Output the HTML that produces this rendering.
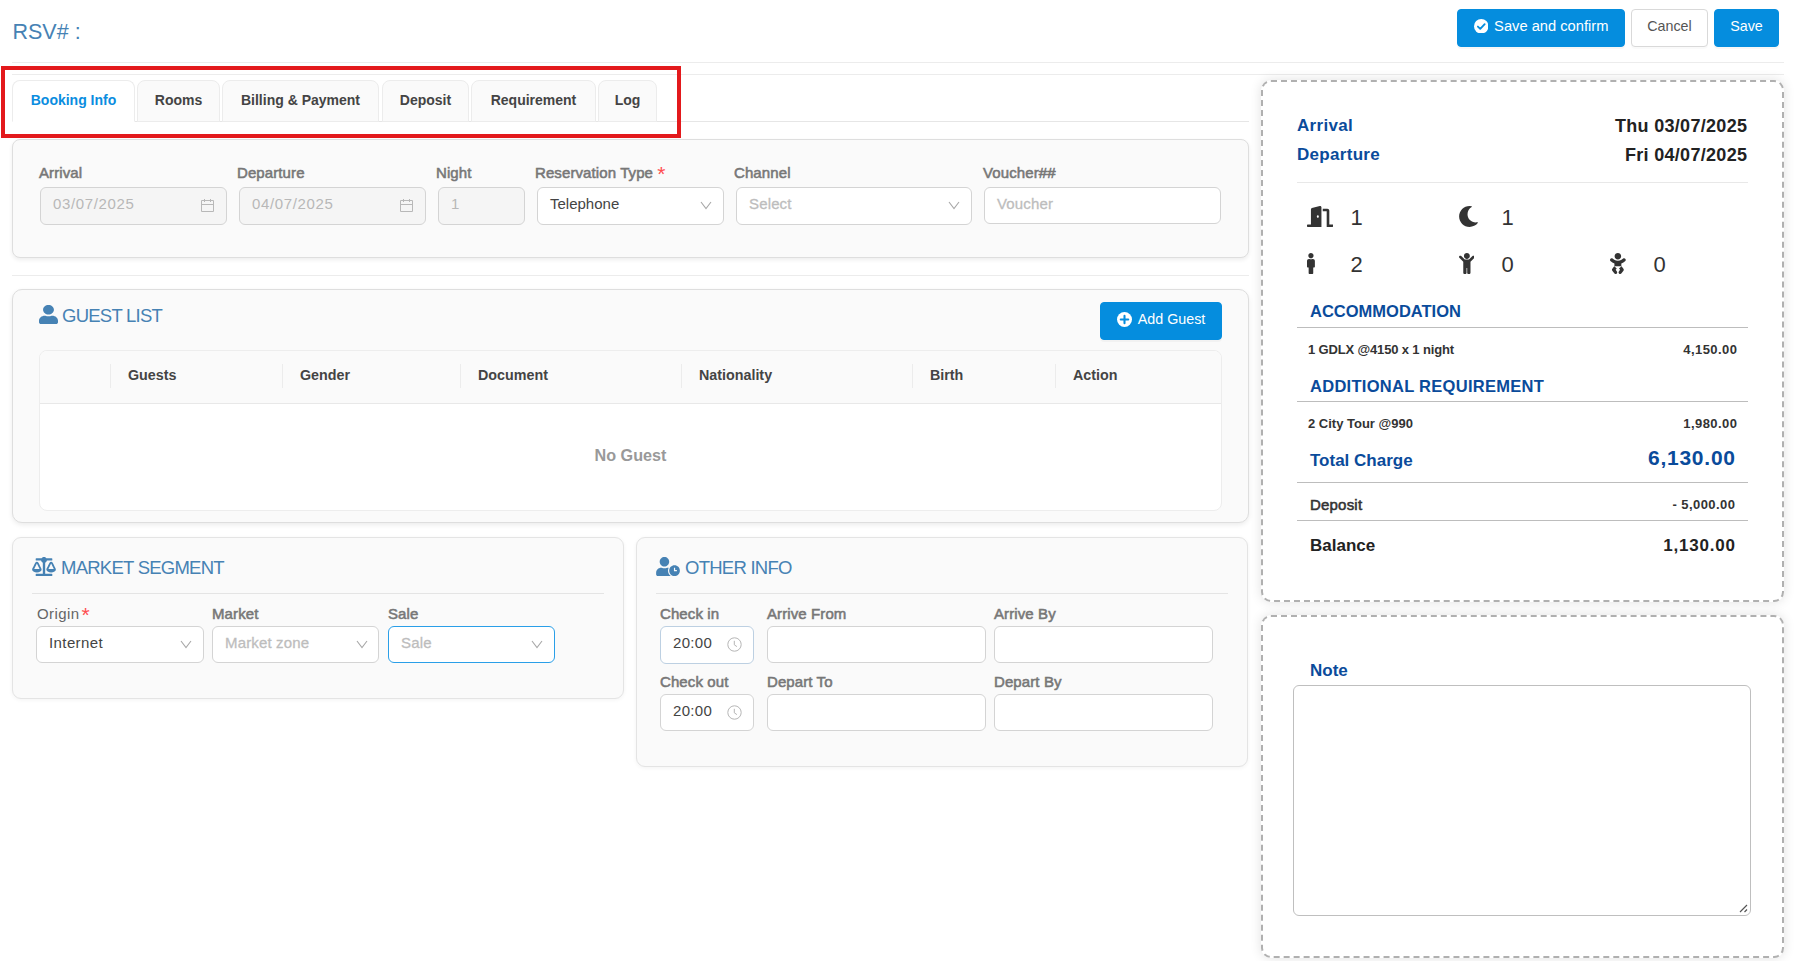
<!DOCTYPE html>
<html lang="en">
<head>
<meta charset="utf-8">
<title>Reservation</title>
<style>
*{box-sizing:border-box;margin:0;padding:0}
html,body{width:1794px;height:961px;overflow:hidden;background:#fff}
body{position:relative;font-family:"Liberation Sans",sans-serif;font-size:15px;color:#333}
.abs{position:absolute}
.title{left:12.5px;top:18px;font-size:21.5px;line-height:28px;color:#4682b4;white-space:nowrap}
.hr{position:absolute;height:1px;background:#ececec}
.btn{position:absolute;height:38px;border-radius:4px;font-size:14.3px;line-height:32px;text-align:center;white-space:nowrap;border:1px solid #058dde}
.btn.primary{background:#058dde;color:#fff;box-shadow:0 2px 0 rgba(0,0,0,.03)}
.btn.default{background:#fff;color:#555;border-color:#d9d9d9;box-shadow:0 2px 0 rgba(0,0,0,.02)}
.btn svg{vertical-align:-2.5px;margin-right:6px}
.redbox{left:1px;top:66px;width:680px;height:72px;border:4px solid #e3191c}
.tab{position:absolute;top:80px;height:42px;border:1px solid #ececec;border-radius:8px 8px 0 0;background:#fafafa;font-weight:bold;font-size:14px;line-height:39px;text-align:center;color:#444;white-space:nowrap}
.tab.active{background:#fff;color:#0a8de0;border-bottom-color:#fff}
.panel{position:absolute;background:#fafafa;border:1px solid #dedede;border-radius:10px;box-shadow:0 2px 5px rgba(0,0,0,.08)}
.panel.p2{border-radius:9px;border-color:#e4e4e4;box-shadow:0 1px 4px rgba(0,0,0,.05)}
.lbl{position:absolute;font-size:15px;letter-spacing:.1px;line-height:20px;font-weight:normal;-webkit-text-stroke:.55px #777;color:#777;white-space:nowrap}
.lbl i{font-style:normal;color:#ff4d4f;font-weight:normal;font-size:21px;line-height:0;position:relative;top:3px;left:0px;letter-spacing:0;-webkit-text-stroke:0 transparent}
.inp{position:absolute;height:38px;border:1px solid #d4d4d4;border-radius:6px;background:#fff;font-size:15px;line-height:32px;padding-left:12px;color:#444;white-space:nowrap}
.inp.dis{background:#f5f5f5;color:#b8b8b8;letter-spacing:.65px}
.inp.ph{color:#bdbdbd;-webkit-text-stroke:.3px #bdbdbd;letter-spacing:.15px}
.inp.focus{border:1.5px solid #2a9fe8}
.inp svg{position:absolute}
.sect{position:absolute;font-size:18.5px;letter-spacing:-.75px;line-height:24px;margin-top:1px;color:#4682b4;white-space:nowrap}

.tbl{border:1px solid #ededed;border-radius:8px;background:#fff;overflow:hidden}
.thead{height:53px;background:#fafafa;border-bottom:1px solid #e8e8e8;display:flex;align-items:center;font-weight:bold;font-size:14.3px;color:#444}
.thead span{display:block;height:24px;line-height:22px;padding-left:17px;border-right:1px solid #ececec;margin-top:-3px;flex:none}
.thead span.last{border-right:0}
.empty{text-align:center;font-weight:bold;font-size:16.2px;color:#999;line-height:20px;padding-top:40.5px}

.card{position:absolute;background:#fff;border:2px dashed #b0b0b0;border-radius:10px;box-shadow:0 0 12px rgba(0,0,0,.12)}
.sl,.sr,.num,.sh,.it,.tot,.dep,.bal{position:absolute;white-space:nowrap}
.sl{font-size:17px;line-height:22px;font-weight:bold;color:#0a4b9b;letter-spacing:.3px;margin-top:1px}
.sr{font-size:18px;line-height:22px;font-weight:bold;color:#222;letter-spacing:.3px;margin-top:.5px;margin-right:-.3px}
.num{font-size:22px;line-height:28px;color:#333;margin-left:.5px}
.sh{font-size:16.5px;line-height:22px;font-weight:bold;color:#0a4b9b;margin-top:1px}
.it{font-size:13px;line-height:18px;font-weight:bold;color:#333;margin-top:1px}
.it.n{letter-spacing:.45px;margin-right:-.45px}
.tot{font-size:21px;line-height:28px;font-weight:bold;color:#0a4b9b;letter-spacing:.75px;margin-right:-.75px}
.dep{font-size:15px;line-height:20px;font-weight:normal;-webkit-text-stroke:.55px #333;letter-spacing:.2px;color:#333;margin-top:.8px}
.bal{font-size:17px;line-height:22px;font-weight:bold;color:#222;margin-top:2px}
.bal.n{letter-spacing:.8px;margin-right:-.8px}
.ta{border:1px solid #bfbfbf;border-radius:6px;background:#fff}
</style>
</head>
<body>
<div class="abs title">RSV# :</div>
<div class="btn primary" style="left:1457px;top:9px;width:168px;font-size:14.7px"><svg width="14.5" height="14.5" style="vertical-align:-2px" viewBox="0 0 16 16"><circle cx="8" cy="8" r="8" fill="#fff"/><path d="M4.3 8.3l2.6 2.6 4.9-5.2" fill="none" stroke="#058dde" stroke-width="2" stroke-linecap="round" stroke-linejoin="round"/></svg>Save and confirm</div>
<div class="btn default" style="left:1631px;top:9px;width:77px">Cancel</div>
<div class="btn primary" style="left:1714px;top:9px;width:65px">Save</div>
<div class="hr" style="left:12px;top:62px;width:1772px"></div>
<div class="hr" style="left:12px;top:74px;width:1772px"></div>
<div class="hr" style="left:12px;top:121px;width:1237px;background:#e6e6e6"></div>
<div class="tab active" style="left:12px;width:123px">Booking Info</div>
<div class="tab" style="left:137px;width:83px">Rooms</div>
<div class="tab" style="left:222px;width:157px">Billing &amp; Payment</div>
<div class="tab" style="left:382px;width:87px">Deposit</div>
<div class="tab" style="left:471px;width:125px">Requirement</div>
<div class="tab" style="left:598px;width:59px">Log</div>
<div class="abs redbox"></div>

<!-- booking info panel -->
<div class="panel" style="left:12px;top:139px;width:1237px;height:119px;border-radius:8px;box-shadow:0 2px 4px rgba(0,0,0,.07)"></div>
<div class="lbl" style="left:39px;top:163px">Arrival</div>
<div class="lbl" style="left:237px;top:163px">Departure</div>
<div class="lbl" style="left:436px;top:163px">Night</div>
<div class="lbl" style="left:535px;top:163px">Reservation Type <i>*</i></div>
<div class="lbl" style="left:734px;top:163px">Channel</div>
<div class="lbl" style="left:983px;top:163px">Voucher##</div>
<div class="inp dis" style="left:40px;top:187px;width:187px">03/07/2025<svg class="cal" style="left:160px;top:10px" width="14" height="14" viewBox="0 0 14 14"><path d="M.5 2.5h12v11h-12zM.5 6.500h12M3.500 1v3M9.500 1v3" fill="none" stroke="#b8b8b8" stroke-width="1"/></svg></div>
<div class="inp dis" style="left:239px;top:187px;width:187px">04/07/2025<svg class="cal" style="left:160px;top:10px" width="14" height="14" viewBox="0 0 14 14"><path d="M.5 2.5h12v11h-12zM.5 6.500h12M3.500 1v3M9.500 1v3" fill="none" stroke="#b8b8b8" stroke-width="1"/></svg></div>
<div class="inp dis" style="left:438px;top:187px;width:87px">1</div>
<div class="inp" style="left:537px;top:187px;width:187px">Telephone<svg style="left:162px;top:13px" width="12" height="9" viewBox="0 0 12 9"><path d="M1 1l5 6.5 5-6.5" fill="none" stroke="#a8a8a8" stroke-width="1.1"/></svg></div>
<div class="inp ph" style="left:736px;top:187px;width:236px">Select<svg style="left:211px;top:13px" width="12" height="9" viewBox="0 0 12 9"><path d="M1 1l5 6.5 5-6.5" fill="none" stroke="#a8a8a8" stroke-width="1.1"/></svg></div>
<div class="inp ph" style="left:984px;top:187px;width:237px;height:36.5px">Voucher</div>
<div class="hr" style="left:12px;top:275px;width:1237px"></div>

<!-- guest list panel -->
<div class="panel" style="left:12px;top:289px;width:1237px;height:234px"></div>
<svg class="abs" style="left:39px;top:305px" width="19" height="19" viewBox="0 0 448 512" preserveAspectRatio="none"><path fill="#4682b4" d="M224 256c70.700 0 128-57.300 128-128S294.700 0 224 0 96 57.300 96 128s57.300 128 128 128zm89.600 32h-16.700c-22.200 10.200-46.900 16-72.900 16s-50.600-5.800-72.900-16h-16.700C60.200 288 0 348.200 0 422.400V464c0 26.500 21.500 48 48 48h352c26.500 0 48-21.500 48-48v-41.600c0-74.200-60.200-134.400-134.400-134.400z"/></svg>
<div class="sect" style="left:62px;top:303px">GUEST LIST</div>
<div class="btn primary" style="left:1100px;top:302px;width:122px"><svg width="15" height="15" viewBox="0 0 16 16"><circle cx="8" cy="8" r="8" fill="#fff"/><path d="M8 4v8M4 8h8" fill="none" stroke="#058dde" stroke-width="2.2" stroke-linecap="round"/></svg>Add Guest</div>
<div class="abs tbl" style="left:39px;top:350px;width:1183px;height:161px">
 <div class="thead">
  <span style="width:71px"></span><span style="width:172px">Guests</span><span style="width:178px">Gender</span><span style="width:221px">Document</span><span style="width:231px">Nationality</span><span style="width:143px">Birth</span><span style="width:165px" class="last">Action</span>
 </div>
 <div class="empty">No Guest</div>
</div>

<!-- market segment -->
<div class="panel p2" style="left:12px;top:537px;width:612px;height:162px"></div>
<svg class="abs" style="left:32px;top:557px" width="24" height="19" viewBox="0 0 640 512"><path fill="#4682b4" d="M256 336h-.02c0-16.180 1.340-8.730-85.050-181.510-17.650-35.290-68.190-35.360-85.870 0C-2.060 328.750.02 320.330.02 336H0c0 44.180 57.310 80 128 80s128-35.820 128-80zM128 176l72 144H56l72-144zm511.980 160c0-16.180 1.340-8.730-85.050-181.510-17.650-35.290-68.190-35.360-85.870 0-87.120 174.260-85.040 165.840-85.040 181.510H384c0 44.180 57.310 80 128 80s128-35.820 128-80h-.02zM440 320l72-144 72 144H440zm88 128H352V153.250c23.510-10.290 41.160-31.480 46.390-57.250H528c8.840 0 16-7.160 16-16V48c0-8.840-7.160-16-16-16H383.640C369.040 12.680 346.090 0 320 0s-49.040 12.680-63.640 32H112c-8.840 0-16 7.160-16 16v32c0 8.840 7.160 16 16 16h129.610c5.230 25.760 22.870 46.960 46.390 57.250V448H112c-8.840 0-16 7.160-16 16v32c0 8.840 7.160 16 16 16h416c8.840 0 16-7.160 16-16v-32c0-8.840-7.160-16-16-16z"/></svg>
<div class="sect" style="left:61px;top:555px">MARKET SEGMENT</div>
<div class="hr" style="left:32px;top:593px;width:572px;background:#e4e4e4"></div>
<div class="lbl" style="left:37px;top:604px;font-weight:normal;color:#666;letter-spacing:.4px;-webkit-text-stroke:0 transparent">Origin <i style="margin-left:-2.5px">*</i></div>
<div class="lbl" style="left:212px;top:604px">Market</div>
<div class="lbl" style="left:388px;top:604px">Sale</div>
<div class="inp" style="left:36px;top:626px;width:168px;height:37px;letter-spacing:.4px">Internet<svg style="left:143px;top:13px" width="12" height="9" viewBox="0 0 12 9"><path d="M1 1l5 6.5 5-6.5" fill="none" stroke="#a8a8a8" stroke-width="1.1"/></svg></div>
<div class="inp ph" style="left:212px;top:626px;width:167px;height:37px">Market zone<svg style="left:143px;top:13px" width="12" height="9" viewBox="0 0 12 9"><path d="M1 1l5 6.5 5-6.5" fill="none" stroke="#a8a8a8" stroke-width="1.1"/></svg></div>
<div class="inp ph focus" style="left:388px;top:626px;width:167px;height:37px">Sale<svg style="left:142px;top:13px" width="12" height="9" viewBox="0 0 12 9"><path d="M1 1l5 6.5 5-6.5" fill="none" stroke="#a8a8a8" stroke-width="1.1"/></svg></div>

<!-- other info -->
<div class="panel p2" style="left:636px;top:537px;width:612px;height:230px"></div>
<svg class="abs" style="left:656px;top:557px" width="24" height="19" viewBox="0 0 640 512"><path fill="#4682b4" d="M496 224c-79.600 0-144 64.400-144 144s64.400 144 144 144 144-64.400 144-144-64.400-144-144-144zm64 150.300c0 5.300-4.400 9.700-9.700 9.700h-60.600c-5.300 0-9.700-4.400-9.700-9.700v-76.600c0-5.300 4.400-9.700 9.700-9.700h12.600c5.300 0 9.700 4.400 9.700 9.700V352h38.300c5.300 0 9.700 4.400 9.700 9.700v12.600zM320 368c0-27.800 6.700-54.100 18.200-77.500-8-1.500-16.200-2.500-24.600-2.500h-16.700c-22.200 10.200-46.900 16-72.900 16s-50.600-5.800-72.900-16h-16.700C60.200 288 0 348.200 0 422.400V464c0 26.500 21.500 48 48 48h347.100c-45.300-31.900-75.100-84.500-75.100-144zm-96-112c70.700 0 128-57.300 128-128S294.700 0 224 0 96 57.300 96 128s57.300 128 128 128z"/></svg>
<div class="sect" style="left:685px;top:555px">OTHER INFO</div>
<div class="hr" style="left:656px;top:593px;width:572px;background:#e4e4e4"></div>
<div class="lbl" style="left:660px;top:604px">Check in</div>
<div class="lbl" style="left:767px;top:604px">Arrive From</div>
<div class="lbl" style="left:994px;top:604px">Arrive By</div>
<div class="inp" style="left:660px;top:626px;width:94px;height:38px;border-color:#bdd0e2;color:#444;letter-spacing:.3px">20:00<svg style="left:66px;top:10px" width="15" height="15" viewBox="0 0 15 15"><circle cx="7.500" cy="7.500" r="6.700" fill="none" stroke="#b5b5b5" stroke-width="1"/><path d="M7.300 3.800v4l2.600 1.800" fill="none" stroke="#b5b5b5" stroke-width="1"/></svg></div>
<div class="inp" style="left:767px;top:626px;width:219px;height:37px"></div>
<div class="inp" style="left:994px;top:626px;width:219px;height:37px"></div>
<div class="lbl" style="left:660px;top:672px">Check out</div>
<div class="lbl" style="left:767px;top:672px">Depart To</div>
<div class="lbl" style="left:994px;top:672px">Depart By</div>
<div class="inp" style="left:660px;top:693.5px;width:94px;height:37.5px;color:#444;letter-spacing:.3px">20:00<svg style="left:66px;top:10px" width="15" height="15" viewBox="0 0 15 15"><circle cx="7.500" cy="7.500" r="6.700" fill="none" stroke="#b5b5b5" stroke-width="1"/><path d="M7.300 3.800v4l2.600 1.800" fill="none" stroke="#b5b5b5" stroke-width="1"/></svg></div>
<div class="inp" style="left:767px;top:693.5px;width:219px;height:37.5px"></div>
<div class="inp" style="left:994px;top:693.5px;width:219px;height:37.5px"></div>

<!-- summary card -->
<div class="card" style="left:1261px;top:80px;width:523px;height:522px"></div>
<div class="sl" style="left:1297px;top:114px">Arrival</div>
<div class="sr" style="right:47px;top:114px">Thu 03/07/2025</div>
<div class="sl" style="left:1297px;top:143px">Departure</div>
<div class="sr" style="right:47px;top:143px">Fri 04/07/2025</div>
<div class="hr" style="left:1297px;top:182px;width:451px;background:#e8e8e8"></div>
<svg class="abs" style="left:1307px;top:206px" width="26.25" height="21" viewBox="0 0 640 512"><path fill="#333" d="M624 448h-80V113.450C544 86.190 522.470 64 496 64H384v64h96v384h144c8.840 0 16-7.160 16-16v-32c0-8.840-7.160-16-16-16zM312.240 1.010l-192 49.740C106 54.440 96 67.700 96 82.920V448H16c-8.840 0-16 7.160-16 16v32c0 8.840 7.160 16 16 16h336V33.180c0-21.580-19.560-37.410-39.760-32.170zM264 288c-13.250 0-24-14.330-24-32s10.750-32 24-32 24 14.330 24 32-10.750 32-24 32z"/></svg><div class="num" style="left:1350px;top:204px">1</div>
<svg class="abs" style="left:1458px;top:206px" width="21" height="21" viewBox="0 0 512 512"><path fill="#333" d="M283.211 512c78.962 0 151.079-35.925 198.857-94.792 7.068-8.708-.639-21.430-11.562-19.350-124.203 23.654-238.262-71.576-238.262-196.954 0-72.222 38.662-138.635 101.498-174.394 9.686-5.512 7.250-20.197-3.756-22.230A258.156 258.156 0 0 0 283.211 0c-141.309 0-256 114.511-256 256 0 141.309 114.511 256 256 256z"/></svg><div class="num" style="left:1501px;top:204px">1</div>
<svg class="abs" style="left:1307px;top:253.3px" width="7.875" height="21" viewBox="0 0 192 512"><path fill="#333" d="M96 0c35.346 0 64 28.654 64 64s-28.654 64-64 64-64-28.654-64-64S60.654 0 96 0m48 144h-11.360c-22.711 10.443-49.590 10.894-73.280 0H48c-26.510 0-48 21.490-48 48v136c0 13.255 10.745 24 24 24h16v136c0 13.255 10.745 24 24 24h64c13.255 0 24-10.745 24-24V352h16c13.255 0 24-10.745 24-24V192c0-26.510-21.490-48-48-48z"/></svg><div class="num" style="left:1350px;top:251px">2</div>
<svg class="abs" style="left:1458.5px;top:253.3px" width="15.75" height="21" viewBox="0 0 384 512"><path fill="#333" d="M120 72c0-39.765 32.235-72 72-72s72 32.235 72 72c0 39.764-32.235 72-72 72s-72-32.236-72-72zm254.627 1.373c-12.496-12.497-32.758-12.497-45.254 0L242.745 160H141.254L54.627 73.373c-12.496-12.497-32.758-12.497-45.254 0-12.497 12.497-12.497 32.758 0 45.255L104 213.254V480c0 17.673 14.327 32 32 32h16c17.673 0 32-14.327 32-32V368h16v112c0 17.673 14.327 32 32 32h16c17.673 0 32-14.327 32-32V213.254l94.627-94.627c12.497-12.497 12.497-32.757 0-45.254z"/></svg><div class="num" style="left:1501px;top:251px">0</div>
<svg class="abs" style="left:1610px;top:253.3px" width="15.75" height="21" viewBox="0 0 384 512"><path fill="#333" d="M192 160c44.200 0 80-35.800 80-80S236.200 0 192 0s-80 35.800-80 80 35.800 80 80 80zm-53.400 248.800l25.600-32-61.500-51.200L56.800 383.300c-11.400 14.200-11.700 34.400-.8 49l48 64c7.900 10.500 19.900 16 32 16 8.300 0 16.800-2.600 24-8 17.700-13.200 21.200-38.300 8-56l-29.400-39.500zm142.700-83.200l-61.500 51.200 25.600 32L216 448.300c-13.200 17.700-9.700 42.800 8 56 7.200 5.400 15.600 8 24 8 12.200 0 24.200-5.500 32-16l48-64c10.900-14.600 10.600-34.800-.8-49l-45.900-57.700zM376.700 145c-12.700-18.100-37.600-22.400-55.700-9.800l-40.600 28.500c-52.700 37-124.200 37-176.800 0L63 135.200c-18.100-12.700-43-8.300-55.700 9.800-12.700 18.100-8.300 43 9.800 55.700L57.700 229.200c15.500 10.900 32.400 19.200 50.300 25.400V320h168v-65.400c17.900-6.200 34.800-14.500 50.300-25.400l40.600-28.500c18.100-12.700 22.500-37.600 9.800-55.700z"/></svg><div class="num" style="left:1653px;top:251px">0</div>
<div class="sh" style="left:1310px;top:299px">ACCOMMODATION</div>
<div class="hr" style="left:1297px;top:327px;width:451px;background:#bdbdbd"></div>
<div class="it" style="left:1308px;top:340px;letter-spacing:-.15px">1 GDLX @4150 x 1 night</div>
<div class="it n" style="right:57px;top:340px">4,150.00</div>
<div class="sh" style="left:1310px;top:374px;letter-spacing:.28px">ADDITIONAL REQUIREMENT</div>
<div class="hr" style="left:1297px;top:401px;width:451px;background:#bdbdbd"></div>
<div class="it" style="left:1308px;top:414px">2 City Tour @990</div>
<div class="it n" style="right:57px;top:414px">1,980.00</div>
<div class="sh" style="left:1310px;top:449px;font-size:17px">Total Charge</div>
<div class="tot" style="right:59px;top:444px">6,130.00</div>
<div class="hr" style="left:1297px;top:482px;width:451px;background:#bdbdbd"></div>
<div class="dep" style="left:1310px;top:494px">Deposit</div>
<div class="it n" style="right:59px;top:495px">- 5,000.00</div>
<div class="hr" style="left:1297px;top:520px;width:451px;background:#bdbdbd"></div>
<div class="bal" style="left:1310px;top:533px">Balance</div>
<div class="bal n" style="right:59px;top:533px">1,130.00</div>

<!-- note card -->
<div class="card" style="left:1261px;top:614.5px;width:523px;height:343px"></div>
<div class="sh" style="left:1310px;top:659px;font-size:17px">Note</div>
<div class="abs ta" style="left:1293px;top:685px;width:458px;height:231px"><svg style="position:absolute;right:2px;bottom:2px" width="9" height="9" viewBox="0 0 9 9"><path d="M8 1L1 8M8 5.500L5.500 8" stroke="#555" stroke-width="1.200" fill="none"/></svg></div>
</body>
</html>
